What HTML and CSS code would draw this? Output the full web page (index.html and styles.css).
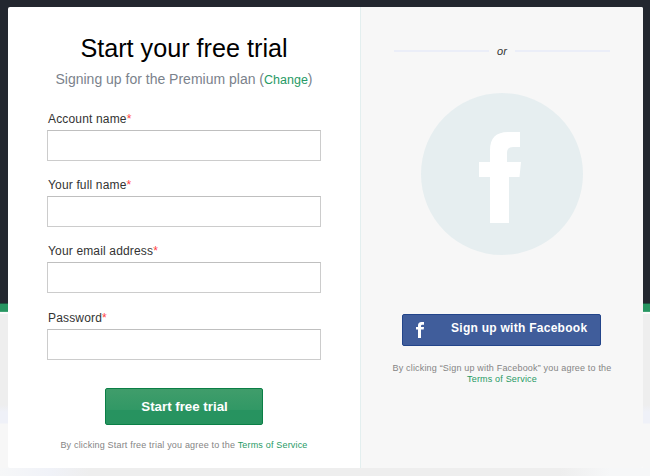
FILE: index.html
```html
<!DOCTYPE html>
<html lang="en">
<head>
<meta charset="utf-8">
<title>Start your free trial</title>
<link rel="stylesheet" href="styles.css">
</head>
<body>
<main class="card">
  <section class="signup">
    <h1 class="title"><span class="title-text">Start your free trial</span></h1>
    <p class="plan">Signing up for the Premium plan (<a href="#" class="change">Change</a>)</p>
    <form class="form">
      <div class="field"><label for="account">Account name<span class="req">*</span></label><input id="account" type="text"></div>
      <div class="field"><label for="name">Your full name<span class="req">*</span></label><input id="name" type="text"></div>
      <div class="field"><label for="email">Your email address<span class="req">*</span></label><input id="email" type="email"></div>
      <div class="field"><label for="password">Password<span class="req">*</span></label><input id="password" type="password"></div>
      <button class="start" type="button">Start free trial</button>
    </form>
    <p class="terms">By clicking Start free trial you agree to the <a href="#">Terms of Service</a></p>
  </section>
  <aside class="social">
    <div class="divider"><span>or</span></div>
    <svg class="badge" viewBox="0 0 162 162" aria-hidden="true">
      <circle cx="81" cy="81" r="81" fill="#e6eef0"/>
      <path d="M58 69H69V57Q69 39 87 39H99V54H92Q86 54 86 60V69H100L98.500 84H88V130H69V84H58Z" fill="#fff"/>
    </svg>
    <button class="facebook" type="button">
      <svg class="fb-icon" viewBox="0 0 8 16" aria-hidden="true"><path d="M0 5H2V3.500Q2 0 5.500 0H8V2.700H6.400Q5 2.700 5 4V5H8L7.700 7.500H5V16H2V7.500H0Z" fill="#fff"/></svg>
      <span class="fb-label">Sign up with Facebook</span>
    </button>
    <p class="terms social-terms">By clicking “Sign up with Facebook” you agree to the<br><a href="#">Terms of Service</a></p>
  </aside>
</main>
</body>
</html>
```
FILE: styles.css
```css
* {
  box-sizing: border-box;
}

body {
  margin: 0;
  height: 476px;
  padding: 7px 7px 8px 8px;
  overflow: hidden;
  font-family: "Liberation Sans", Arial, sans-serif;
  color: #333;
  background:
    linear-gradient(90deg, #f6f7f8 0, #f0f2f8 50px, #eee 90px, #eee 560px, #f6f7f8 610px) 0 468px / 650px 8px no-repeat,
    linear-gradient(#23272f 0 303px, #1d5540 303px 304px, #279561 304px 311px, #3fa374 311px 312px, #fafafa 312px 314px, #eee 314px 405px, #eff1f8 412px 423px, #f7f7f7 424px);
}

h1,
p {
  margin: 0;
}

a {
  color: #279a65;
  text-decoration: none;
}

.card {
  display: flex;
  width: 635px;
  height: 461px;
  overflow: hidden;
  border-radius: 2px;
  background: #fff;
}

.signup {
  width: 352px;
  padding-top: 25px;
  text-align: center;
}

.title {
  height: 34px;
  font-size: 25.200px;
  font-weight: 400;
  line-height: 33px;
  color: #000;
}

.plan {
  height: 26px;
  font-size: 14px;
  line-height: 27px;
  color: #7b828c;
}

.change {
  font-size: 12.500px;
}

.form {
  display: flex;
  flex-direction: column;
  align-items: center;
  padding-top: 18px;
}

.field {
  width: 274px;
  height: 66.200px;
  text-align: left;
}

.field label {
  display: block;
  height: 20px;
  padding-left: 1px;
  font-size: 12px;
  line-height: 18px;
  letter-spacing: 0.160px;
}

.req {
  color: #f44;
}

.field input {
  display: block;
  width: 274px;
  height: 31px;
  border: 1px solid #ccc;
  border-top-color: #bfbfbf;
  border-radius: 0;
  background: #fff;
}

.start {
  width: 158px;
  height: 37px;
  margin-top: 13px;
  border: 1px solid #0b7f46;
  border-radius: 2px;
  background: linear-gradient(#409d6b 0, #319865 60%, #279360 61%, #27935f);
  color: #fff;
  font: bold 13.300px "Liberation Sans", Arial, sans-serif;
  padding: 1px 0 0 1px;
}

.terms {
  font-size: 9px;
  line-height: 12px;
  color: #858585;
  letter-spacing: 0.180px;
}

.signup .terms {
  margin-top: 14px;
}

.social {
  display: flex;
  flex-direction: column;
  align-items: center;
  width: 283px;
  padding-top: 36px;
  border-left: 1px solid #e3efef;
  background: #f7f7f7;
  text-align: center;
}

.divider {
  display: flex;
  align-items: center;
  justify-content: space-between;
  width: 216px;
  height: 16px;
  font-size: 11px;
  font-style: italic;
}

.divider::before,
.divider::after {
  content: "";
  width: 95px;
  height: 2px;
  background: #ebeef8;
}

.badge {
  width: 162px;
  height: 162px;
  margin-top: 34px;
}

.facebook {
  display: flex;
  align-items: center;
  width: 199px;
  height: 32px;
  margin-top: 59px;
  margin-right: 1px;
  padding: 0 0 0 13px;
  border: 1px solid #23458a;
  border-radius: 2px;
  background: #405d9b;
  color: #fff;
  font: bold 12px "Liberation Sans", Arial, sans-serif;
}

.fb-icon {
  width: 8px;
  height: 16px;
}

.fb-label {
  margin: -5px 0 0 27px;
  letter-spacing: 0.270px;
}

.social-terms {
  margin-top: 17px;
  line-height: 11px;
}
```
